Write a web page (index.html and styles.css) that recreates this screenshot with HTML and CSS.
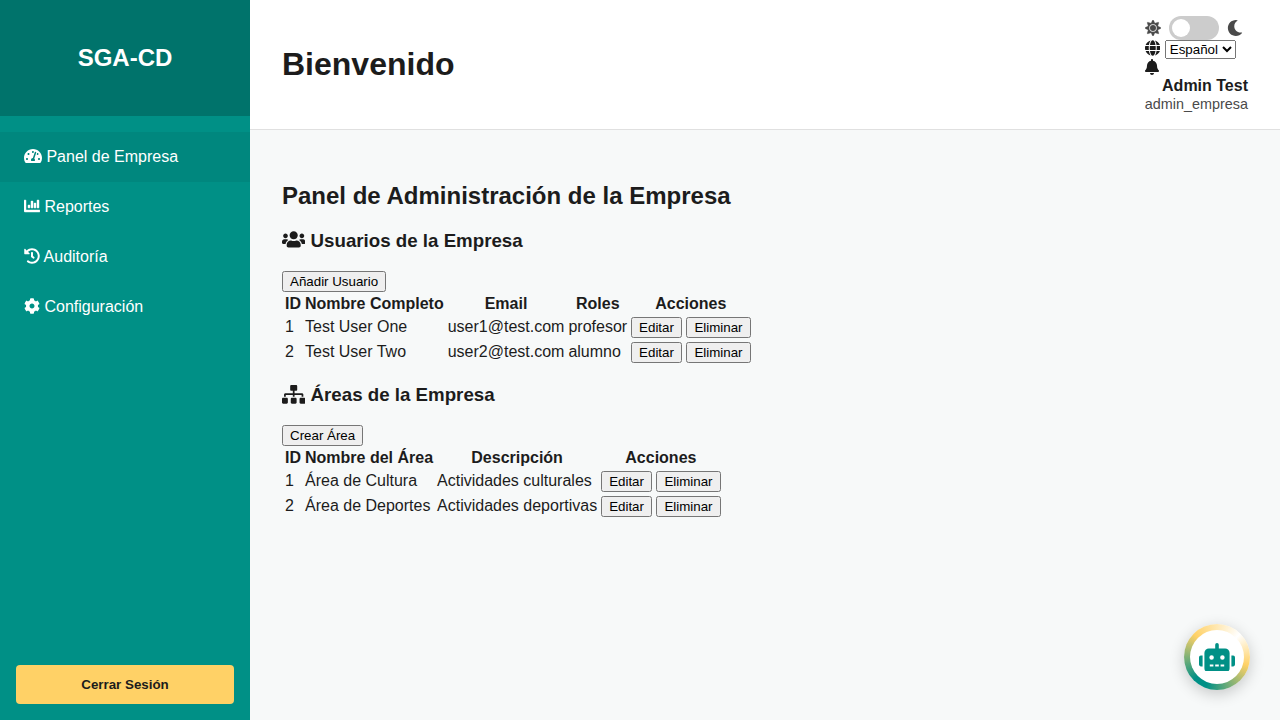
FILE: index.html
```html
<!DOCTYPE html>
<html lang="es">
<head>
<meta charset="utf-8">
<meta name="viewport" content="width=device-width, initial-scale=1">
<title>SGA-CD</title>
<link rel="stylesheet" href="styles.css">
</head>
<body>
<div class="app">
  <aside class="sidebar">
    <div class="sidebar-header"><h2>SGA-CD</h2></div>
    <nav class="sidebar-nav">
      <a href="#panel" class="active"><svg class="icon" viewBox="0 0 576 512"><path d="M288 32C128.94 32 0 160.94 0 320c0 52.8 14.25 102.26 39.06 144.8 5.61 9.62 16.3 15.2 27.44 15.2h443c11.14 0 21.83-5.58 27.44-15.2C561.75 422.26 576 372.8 576 320c0-159.06-128.94-288-288-288zm0 64c14.71 0 26.58 10.13 30.32 23.65-1.11 2.26-2.64 4.23-3.45 6.67l-9.22 27.67c-5.13 3.49-10.97 6.01-17.64 6.01-17.67 0-32-14.33-32-32S270.33 96 288 96zM96 384c-17.67 0-32-14.33-32-32s14.33-32 32-32 32 14.33 32 32-14.33 32-32 32zm48-160c-17.67 0-32-14.33-32-32s14.33-32 32-32 32 14.33 32 32-14.33 32-32 32zm246.77-72.41l-61.33 184C343.13 347.33 352 364.54 352 384c0 11.72-3.38 22.55-8.88 32H232.88c-5.5-9.45-8.88-20.28-8.88-32 0-33.94 26.5-61.43 59.9-63.59l61.34-184.01c4.17-12.56 17.73-19.45 30.36-15.17 12.57 4.19 19.35 17.79 15.17 30.36zm14.66 57.2l15.52-46.55c3.47-1.29 7.13-2.23 11.05-2.23 17.67 0 32 14.33 32 32s-14.33 32-32 32c-11.38-.01-20.89-6.28-26.57-15.22zM480 384c-17.67 0-32-14.33-32-32s14.33-32 32-32 32 14.33 32 32-14.33 32-32 32z"/></svg> Panel de Empresa</a>
      <a href="#reportes"><svg class="icon" viewBox="0 0 512 512"><path d="M332.8 320h38.4c6.4 0 12.8-6.4 12.8-12.8V172.8c0-6.4-6.4-12.8-12.8-12.8h-38.4c-6.4 0-12.8 6.4-12.8 12.8v134.4c0 6.4 6.4 12.8 12.8 12.8zm96 0h38.4c6.4 0 12.8-6.4 12.8-12.8V76.8c0-6.4-6.4-12.8-12.8-12.8h-38.4c-6.4 0-12.8 6.4-12.8 12.8v230.4c0 6.4 6.4 12.8 12.8 12.8zm-288 0h38.4c6.4 0 12.8-6.4 12.8-12.8v-70.4c0-6.4-6.4-12.8-12.8-12.8h-38.4c-6.4 0-12.8 6.4-12.8 12.8v70.4c0 6.4 6.4 12.8 12.8 12.8zm96 0h38.4c6.4 0 12.8-6.4 12.8-12.8V108.8c0-6.4-6.4-12.8-12.8-12.8h-38.4c-6.4 0-12.8 6.4-12.8 12.8v198.4c0 6.4 6.4 12.8 12.8 12.8zM496 384H64V80c0-8.84-7.16-16-16-16H16C7.16 64 0 71.16 0 80v336c0 17.67 14.33 32 32 32h464c8.84 0 16-7.16 16-16v-32c0-8.84-7.16-16-16-16z" stroke="currentColor" stroke-width="14"/></svg> Reportes</a>
      <a href="#auditoria"><svg class="icon" viewBox="0 0 512 512"><path d="M504 255.531c.253 136.64-111.18 248.372-247.82 248.468-59.015.042-113.223-20.53-155.822-54.911-11.077-8.94-11.905-25.541-1.839-35.607l11.267-11.267c8.609-8.609 22.353-9.551 31.891-1.984C173.062 425.135 212.781 440 256 440c101.705 0 184-82.311 184-184 0-101.705-82.311-184-184-184-48.814 0-93.149 18.969-126.068 49.932l50.754 50.754c10.08 10.08 2.941 27.314-11.313 27.314H24c-8.837 0-16-7.163-16-16V38.627c0-14.254 17.234-21.393 27.314-11.314l49.372 49.372C129.209 34.136 189.552 8 256 8c136.81 0 247.747 110.78 248 247.531zm-180.912 78.784l9.823-12.63c8.138-10.463 6.253-25.542-4.21-33.679L288 256.349V152c0-13.255-10.745-24-24-24h-16c-13.255 0-24 10.745-24 24v135.651l65.409 50.874c10.463 8.137 25.541 6.253 33.679-4.21z"/></svg> Auditoría</a>
      <a href="#configuracion"><svg class="icon" viewBox="0 0 512 512"><path d="M487.4 315.7l-42.6-24.6c4.3-23.2 4.3-47 0-70.2l42.6-24.6c4.9-2.8 7.1-8.6 5.5-14-11.1-35.6-30-67.8-54.7-94.6-3.8-4.1-10-5.1-14.8-2.3L380.8 110c-17.9-15.4-38.5-27.3-60.8-35.1V25.8c0-5.6-3.9-10.5-9.4-11.7-36.7-8.2-74.3-7.8-109.2 0-5.5 1.2-9.4 6.1-9.4 11.7V75c-22.2 7.9-42.8 19.8-60.8 35.1L88.7 85.5c-4.9-2.8-11-1.9-14.8 2.3-24.7 26.7-43.6 58.9-54.7 94.6-1.7 5.4.6 11.2 5.5 14L67.3 221c-4.3 23.2-4.3 47 0 70.2l-42.6 24.6c-4.9 2.8-7.1 8.6-5.5 14 11.1 35.6 30 67.8 54.7 94.6 3.8 4.1 10 5.1 14.8 2.3l42.6-24.6c17.9 15.4 38.5 27.3 60.8 35.1v49.2c0 5.6 3.9 10.5 9.4 11.7 36.7 8.2 74.3 7.8 109.2 0 5.5-1.2 9.4-6.1 9.4-11.7v-49.2c22.2-7.9 42.8-19.8 60.8-35.1l42.6 24.6c4.9 2.8 11 1.9 14.8-2.3 24.7-26.7 43.6-58.9 54.7-94.6 1.5-5.5-.7-11.3-5.6-14.1zM256 336c-44.1 0-80-35.9-80-80s35.9-80 80-80 80 35.9 80 80-35.9 80-80 80z"/></svg> Configuración</a>
    </nav>
    <div class="sidebar-footer"><button type="button" class="logout">Cerrar Sesión</button></div>
  </aside>

  <div class="content">
    <header class="topbar">
      <h1>Bienvenido</h1>
      <div class="user-info">
        <div class="theme">
          <svg class="icon" viewBox="0 0 512 512"><path d="M256 160c-52.9 0-96 43.1-96 96s43.1 96 96 96 96-43.1 96-96-43.1-96-96-96zm246.4 80.5l-94.7-47.3 33.5-100.4c4.5-13.6-8.4-26.5-21.9-21.9l-100.4 33.5-47.4-94.8c-6.4-12.8-24.6-12.8-31 0l-47.3 94.7L92.7 70.8c-13.6-4.5-26.5 8.4-21.9 21.9l33.5 100.4-94.7 47.4c-12.8 6.4-12.8 24.6 0 31l94.7 47.3-33.5 100.5c-4.5 13.6 8.4 26.5 21.9 21.9l100.4-33.5 47.3 94.7c6.4 12.8 24.6 12.8 31 0l47.3-94.7 100.4 33.5c13.6 4.5 26.5-8.4 21.9-21.9l-33.5-100.4 94.7-47.3c13-6.5 13-24.7.2-31.1zm-155.9 106c-49.9 49.9-131.1 49.9-181 0-49.9-49.9-49.9-131.1 0-181 49.9-49.9 131.1-49.9 181 0 49.9 49.9 49.9 131.1 0 181z" stroke="currentColor" stroke-width="10"/></svg>
          <input type="checkbox" class="switch" aria-label="Modo oscuro">
          <svg class="icon" viewBox="0 0 512 512"><path d="M283.211 512c78.962 0 151.079-35.925 198.857-94.792 7.068-8.708-.639-21.43-11.562-19.35-124.203 23.654-238.262-71.576-238.262-196.954 0-72.222 38.662-138.635 101.498-174.394 9.686-5.512 7.25-20.197-3.756-22.23A258.156 258.156 0 0 0 283.211 0c-141.309 0-256 114.511-256 256 0 141.309 114.511 256 256 256z"/></svg>
        </div>
        <div class="language">
          <svg class="icon" viewBox="0 0 496 512"><path d="M336.5 160C322 70.7 287.8 8 248 8s-74 62.7-88.5 152h177zM152 256c0 22.2 1.2 43.5 3.3 64h185.3c2.1-20.5 3.3-41.8 3.3-64s-1.2-43.5-3.3-64H155.3c-2.1 20.5-3.3 41.8-3.3 64zm324.7-96c-28.6-67.9-86.5-120.4-158-141.6 24.4 33.8 41.2 84.7 50 141.6h108zM177.2 18.4C105.8 39.6 47.8 92.1 19.3 160h108c8.7-56.9 25.5-107.8 49.9-141.6zM487.4 192H372.7c2.1 21 3.3 42.5 3.3 64s-1.2 43-3.3 64h114.6c5.5-20.5 8.6-41.8 8.6-64s-3.1-43.5-8.5-64zM120 256c0-21.5 1.2-43 3.3-64H8.6C3.2 212.5 0 233.8 0 256s3.2 43.5 8.6 64h114.6c-2-21-3.2-42.5-3.2-64zm39.5 96c14.5 89.3 48.7 152 88.5 152s74-62.7 88.5-152h-177zm159.3 141.6c71.4-21.2 129.4-73.7 158-141.6h-108c-8.8 56.9-25.6 107.8-50 141.6zM19.3 352c28.6 67.9 86.5 120.4 158 141.6-24.4-33.8-41.2-84.7-50-141.6h-108z"/></svg>
          <select aria-label="Idioma"><option>Español</option><option>English</option></select>
        </div>
        <div class="notifications"><svg class="icon" viewBox="0 0 448 512"><path d="M224 512c35.32 0 63.97-28.65 63.97-64H160.03c0 35.35 28.65 64 63.97 64zm215.39-149.71c-19.32-20.76-55.47-51.99-55.47-154.29 0-77.7-54.48-139.9-127.94-155.16V32c0-17.67-14.32-32-31.98-32s-31.98 14.33-31.98 32v20.84C118.56 68.1 64.08 130.3 64.08 208c0 102.3-36.15 133.53-55.47 154.29-6 6.45-8.66 14.16-8.61 21.71.11 16.4 12.98 32 32.1 32h383.8c19.12 0 32-15.6 32.1-32 .05-7.55-2.61-15.27-8.61-21.71z"/></svg></div>
        <div class="user-name">Admin Test</div>
        <div class="user-role">admin_empresa</div>
      </div>
    </header>

    <main class="main">
      <h2>Panel de Administración de la Empresa</h2>
      <section>
        <h3><svg class="icon" viewBox="0 0 640 512"><path d="M96 224c35.3 0 64-28.7 64-64s-28.7-64-64-64-64 28.7-64 64 28.7 64 64 64zm448 0c35.3 0 64-28.7 64-64s-28.7-64-64-64-64 28.7-64 64 28.7 64 64 64zm32 32h-64c-17.6 0-33.5 7.1-45.1 18.6 40.3 22.1 68.9 62 75.1 109.4h66c17.7 0 32-14.3 32-32v-32c0-35.3-28.7-64-64-64zm-256 0c61.9 0 112-50.1 112-112S381.9 32 320 32 208 82.1 208 144s50.1 112 112 112zm76.8 32h-8.3c-20.8 10-43.9 16-68.5 16s-47.6-6-68.5-16h-8.3C179.6 288 128 339.6 128 403.2V432c0 26.5 21.5 48 48 48h288c26.5 0 48-21.5 48-48v-28.8c0-63.6-51.6-115.2-115.2-115.2zm-223.7-13.4C161.5 263.1 145.6 256 128 256H64c-35.3 0-64 28.7-64 64v32c0 17.7 14.3 32 32 32h65.9c6.3-47.4 34.9-87.3 75.2-109.4z"/></svg> Usuarios de la Empresa</h3>
        <button type="button">Añadir Usuario</button>
        <table>
          <thead><tr><th>ID</th><th>Nombre Completo</th><th>Email</th><th>Roles</th><th>Acciones</th></tr></thead>
          <tbody>
            <tr><td>1</td><td>Test User One</td><td>user1@test.com</td><td>profesor</td><td><button type="button">Editar</button> <button type="button">Eliminar</button></td></tr>
            <tr><td>2</td><td>Test User Two</td><td>user2@test.com</td><td>alumno</td><td><button type="button">Editar</button> <button type="button">Eliminar</button></td></tr>
          </tbody>
        </table>
      </section>
      <section>
        <h3><svg class="icon" viewBox="0 0 640 512"><path d="M128 352H32c-17.67 0-32 14.33-32 32v96c0 17.67 14.33 32 32 32h96c17.67 0 32-14.33 32-32v-96c0-17.67-14.33-32-32-32zm-24-80h192v48h48v-48h192v48h48v-57.59c0-21.17-17.23-38.41-38.41-38.41H344v-64h40c17.67 0 32-14.33 32-32V32c0-17.67-14.33-32-32-32H256c-17.67 0-32 14.33-32 32v96c0 17.67 14.33 32 32 32h40v64H94.41C73.23 224 56 241.23 56 262.41V320h48v-48zm264 80h-96c-17.67 0-32 14.33-32 32v96c0 17.67 14.33 32 32 32h96c17.67 0 32-14.33 32-32v-96c0-17.67-14.33-32-32-32zm240 0h-96c-17.67 0-32 14.33-32 32v96c0 17.67 14.33 32 32 32h96c17.67 0 32-14.33 32-32v-96c0-17.67-14.33-32-32-32z"/></svg> Áreas de la Empresa</h3>
        <button type="button">Crear Área</button>
        <table>
          <thead><tr><th>ID</th><th>Nombre del Área</th><th>Descripción</th><th>Acciones</th></tr></thead>
          <tbody>
            <tr><td>1</td><td>Área de Cultura</td><td>Actividades culturales</td><td><button type="button">Editar</button> <button type="button">Eliminar</button></td></tr>
            <tr><td>2</td><td>Área de Deportes</td><td>Actividades deportivas</td><td><button type="button">Editar</button> <button type="button">Eliminar</button></td></tr>
          </tbody>
        </table>
      </section>
    </main>
  </div>
</div>

<button type="button" class="assistant" aria-label="Asistente">
  <span class="assistant-face"><svg class="robot" viewBox="0 0 640 512"><path d="M32,224H64V416H32A31.96166,31.96166,0,0,1,0,384V256A31.96166,31.96166,0,0,1,32,224Zm512-48V448a64.06328,64.06328,0,0,1-64,64H160a64.06328,64.06328,0,0,1-64-64V176a79.974,79.974,0,0,1,80-80H288V32a32,32,0,0,1,64,0V96H464A79.974,79.974,0,0,1,544,176ZM264,256a40,40,0,1,0-40,40A39.997,39.997,0,0,0,264,256Zm-8,128H192v32h64Zm96,0H288v32h64ZM456,256a40,40,0,1,0-40,40A39.997,39.997,0,0,0,456,256Zm-8,128H384v32h64ZM640,256V384a31.96166,31.96166,0,0,1-32,32H576V224h32A31.96166,31.96166,0,0,1,640,256Z"/></svg></span>
</button>
</body>
</html>
```
FILE: styles.css
```css
* {
  box-sizing: border-box;
}

body {
  margin: 0;
  background: #f7f9f9;
  color: #1c1c1c;
  font-family: "Liberation Sans", Arial, sans-serif;
}

.app {
  display: flex;
  min-height: 100vh;
}

.icon {
  height: 1em;
  fill: currentColor;
  vertical-align: -0.125em;
}

.sidebar {
  display: flex;
  flex-direction: column;
  flex: 0 0 250px;
  background: #009086;
  color: #fff;
}

.sidebar-header {
  padding: 24px;
  background: #00736b;
  text-align: center;
}

.sidebar-nav {
  flex: 1;
  padding-top: 16px;
}

.sidebar-nav a {
  display: block;
  padding: 16px 24px;
  color: #fff;
  text-decoration: none;
}

.sidebar-nav a.active {
  background: #00877e;
}

.sidebar-footer {
  padding: 16px;
}

.logout {
  width: 100%;
  padding: 12px;
  border: 0;
  border-radius: 4px;
  background: #ffd166;
  color: #1c1c1c;
  font-weight: bold;
}

.content {
  flex: 1;
  min-width: 0;
}

.topbar {
  display: flex;
  align-items: center;
  justify-content: space-between;
  padding: 16px 32px;
  border-bottom: 1px solid #e0e0e0;
  background: #fff;
}

.topbar h1 {
  margin: 0;
}

.theme {
  display: flex;
  align-items: center;
  gap: 8px;
  color: #4a4a4a;
}

.switch {
  display: flex;
  align-items: center;
  appearance: none;
  width: 50px;
  height: 24px;
  margin: 0;
  padding: 3px;
  border-radius: 12px;
  background: #ccc;
}

.switch::before {
  content: "";
  width: 18px;
  height: 18px;
  border-radius: 50%;
  background: #fff;
}

.switch:checked {
  justify-content: flex-end;
  background: #009086;
}

.user-name {
  font-weight: bold;
  text-align: right;
}

.user-role {
  color: #4a4a4a;
  font-size: 0.9rem;
  line-height: 18px;
  text-align: right;
}

.main {
  padding: 32px;
}

.assistant {
  position: fixed;
  right: 30px;
  bottom: 30px;
  display: flex;
  width: 66px;
  height: 66px;
  padding: 6px;
  border: 0;
  border-radius: 50%;
  background: conic-gradient(from 45deg, #fff, #ffd166 60deg, #009086 155deg, #009086 180deg, #ffd166 270deg, #fff);
  box-shadow: 0 4px 15px rgba(0, 0, 0, 0.2);
}

.assistant-face {
  display: flex;
  flex: 1;
  align-items: center;
  justify-content: center;
  height: 100%;
  border-radius: 50%;
  background: #fff;
}

.robot {
  width: 36px;
  fill: #009086;
}
```
